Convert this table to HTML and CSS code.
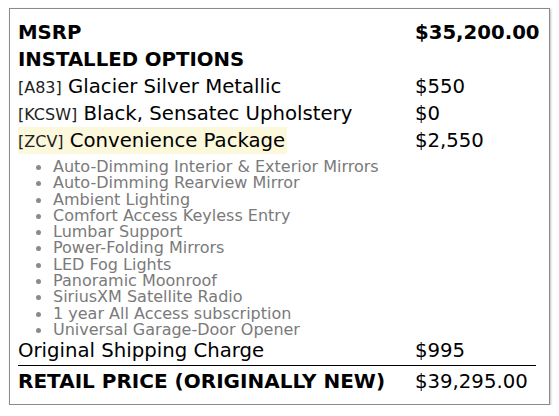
FILE: index.html
```html
<!DOCTYPE html>
<html>
<head>
<meta charset="utf-8">
<link rel="stylesheet" href="styles.css">
</head>
<body>
<div class="sticker">
  <div class="row bold"><span class="label">MSRP</span><span class="price">$35,200.00</span></div>
  <div class="row bold"><span class="label">INSTALLED OPTIONS</span></div>
  <div class="row"><span class="label"><span class="code">[A83]</span> Glacier Silver Metallic</span><span class="price">$550</span></div>
  <div class="row"><span class="label"><span class="code">[KCSW]</span> Black, Sensatec Upholstery</span><span class="price">$0</span></div>
  <div class="row"><span class="label"><span class="hl"><span class="code">[ZCV]</span> Convenience Package</span></span><span class="price">$2,550</span></div>
  <ul class="features">
    <li>Auto-Dimming Interior &amp; Exterior Mirrors</li>
    <li>Auto-Dimming Rearview Mirror</li>
    <li>Ambient Lighting</li>
    <li>Comfort Access Keyless Entry</li>
    <li>Lumbar Support</li>
    <li>Power-Folding Mirrors</li>
    <li>LED Fog Lights</li>
    <li>Panoramic Moonroof</li>
    <li>SiriusXM Satellite Radio</li>
    <li>1 year All Access subscription</li>
    <li>Universal Garage-Door Opener</li>
  </ul>
  <div class="row ship"><span class="label">Original Shipping Charge</span><span class="price">$995</span></div>
  <div class="row total"><span class="label">RETAIL PRICE (ORIGINALLY NEW)</span><span class="price">$39,295.00</span></div>
</div>
</body>
</html>
```
FILE: styles.css
```css
html, body {
  margin: 0;
  padding: 0;
  background: #fff;
}
body {
  font-family: "DejaVu Sans", sans-serif;
  color: #000;
}
.sticker {
  margin: 8px 0 0 9px;
  width: 541px;
  height: 397px;
  box-sizing: border-box;
  border: 1px solid #8a8a8a;
  box-shadow: 1px 1px 2px rgba(0,0,0,0.25);
  padding: 10px 13px 0 8px;
}
.row {
  display: flex;
  font-size: 19.7px;
  line-height: 27px;
  height: 27px;
  white-space: nowrap;
}
.row .label {
  width: 397px;
  flex: none;
}
.row .price {
  flex: 1;
}
.bold {
  font-weight: bold;
}
.code {
  font-size: 16px;
  color: #222;
}
.hl {
  background: #fbf8dc;
  padding: 2px 2px 2px 0;
}
.features {
  margin: 5px 0 -1px 0;
  padding: 0 0 0 17px;
  color: #7a7a7a;
  font-size: 16px;
  line-height: 16.3px;
  list-style: none;
}
.features li {
  position: relative;
  padding-left: 18px;
  white-space: nowrap;
}
.features li::before {
  content: "";
  position: absolute;
  left: 1px;
  top: 6px;
  width: 5px;
  height: 5px;
  border-radius: 50%;
  background: #8a8a8a;
}
.ship {
  height: 28px;
  border-bottom: 1px solid #000;
}
.total .label {
  font-weight: bold;
  font-size: 20px;
}
.total {
  margin-top: 2px;
}
```
